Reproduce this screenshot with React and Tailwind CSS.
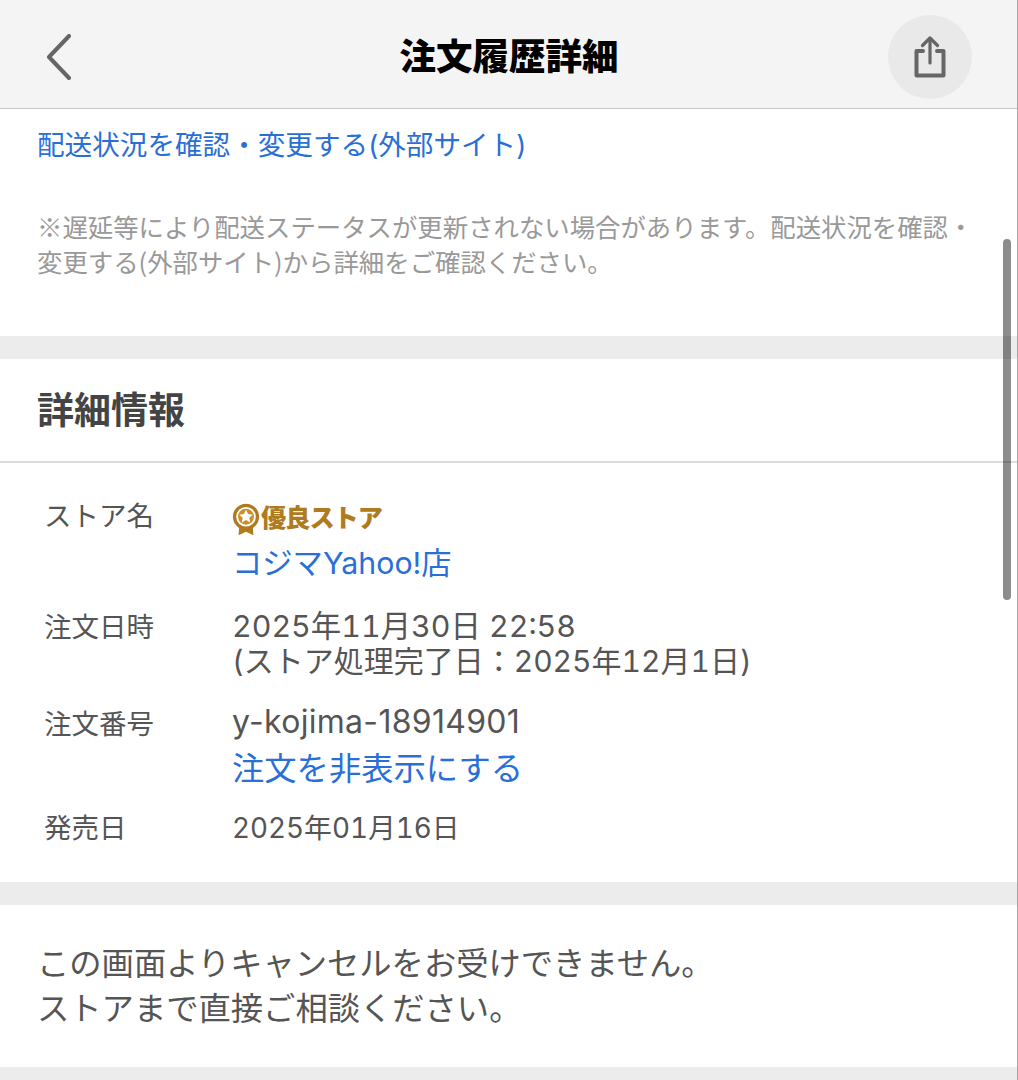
import React from 'react';

const jp = { fontFamily: 'Inter, "Noto Sans CJK JP", sans-serif' };

const Row = ({ label, labelClass = '', className = '', children }) => (
  <div className={`flex ${className}`}>
    <div className={`w-[195px] shrink-0 pl-[7px] text-[27.5px] leading-[36px] text-[#555] ${labelClass}`}>{label}</div>
    <div className="flex-1 text-[#555]">{children}</div>
  </div>
);

const Badge = () => (
  <svg width="28" height="35" viewBox="0 0 30 36" className="shrink-0">
    <path d="M8 23 L7 35 L15 31 L23 35 L22 23 Z" fill="#b07a1e" />
    <circle cx="15" cy="15" r="14" fill="#b07a1e" />
    <circle cx="15" cy="15" r="10.5" fill="#fff" />
    <circle cx="15" cy="15" r="8.5" fill="#c98f2c" />
    <path d="M15 7.5l2.2 4.7 5.1.6-3.8 3.4 1 5-4.5-2.6-4.5 2.6 1-5-3.8-3.4 5.1-.6z" fill="#fff" />
  </svg>
);

export default function App() {
  return (
    <div style={jp} className="relative mx-auto h-[1080px] w-[1018px] overflow-hidden border-r border-[#a8a8a8] bg-white">
      {/* Header */}
      <header className="grid h-[109px] grid-cols-[1fr_auto_1fr] items-center border-b border-[#c6c6c6] bg-[#f4f4f4] pl-[46px] pr-[45px] pt-[6px]">
        <svg width="26" height="46" viewBox="0 0 26 46" fill="none">
          <path d="M23 2 L3 23 L23 44" stroke="#666" strokeWidth="4" strokeLinecap="round" strokeLinejoin="round" />
        </svg>
        <h1 className="text-[36.5px] font-black leading-none text-black">注文履歴詳細</h1>
        <div className="flex h-[84px] w-[84px] items-center justify-center justify-self-end rounded-full bg-[#e9e9e9]">
          <svg width="34" height="44" viewBox="0 0 34 44" fill="none" stroke="#666" strokeLinecap="round" strokeLinejoin="round">
            <path d="M10 16 H3.5 V40.5 H30.5 V16 H24" strokeWidth="4" />
            <path d="M17 28 V3.5" strokeWidth="3.2" />
            <path d="M9.5 10.5 L17 3 L24.5 10.5" strokeWidth="3.2" />
          </svg>
        </div>
      </header>

      {/* Delivery note */}
      <section className="h-[227px] px-[37px] pt-[18px]">
        <a className="block text-[27.6px] leading-[36px] text-[#2a6fd6]">配送状況を確認・変更する(外部サイト)</a>
        <p className="mt-[46px] font-['Noto_Sans_CJK_JP'] text-[25.4px] leading-[35px] text-[#999]">
          ※遅延等により配送ステータスが更新されない場合があります。配送状況を確認・変更する(外部サイト)から詳細をご確認ください。
        </p>
      </section>

      <div className="h-[23px] bg-[#ececec]" />

      {/* Detail info */}
      <section>
        <h2 className="flex h-[104px] items-center border-b-2 border-[#dcdcdc] px-[37px] text-[37px] font-bold leading-none text-[#444]">
          詳細情報
        </h2>
        <div className="h-[419px] px-[37px] pt-[35px]">
          <Row label="ストア名">
            <div className="flex h-[38px] translate-y-[2px] items-center gap-[1px] text-[25.2px] font-black tracking-[-1px] text-[#b07a1e]">
              <Badge />
              優良ストア
            </div>
            <a className="mt-[7px] block text-[30.3px] leading-[40px] text-[#2a6fd6]">コジマYahoo!店</a>
          </Row>
          <Row label="注文日時" className="mt-[26px]">
            <div className="text-[30.4px] leading-[35px] tabular-nums">2025年11月30日 22:58</div>
            <div className="text-[30px] leading-[35px] tabular-nums">(ストア処理完了日：2025年12月1日)</div>
          </Row>
          <Row label="注文番号" labelClass="pt-[2px]" className="mt-[25px]">
            <div className="text-[32px] leading-[36px] tracking-[0.3px]">y-kojima-18914901</div>
            <a className="mt-[7px] block text-[32.3px] leading-[44px] text-[#2a6fd6]">注文を非表示にする</a>
          </Row>
          <Row label="発売日" className="mt-[19px]">
            <div className="text-[27.8px] leading-[36px] tabular-nums">2025年01月16日</div>
          </Row>
        </div>
      </section>

      <div className="h-[23px] bg-[#ececec]" />

      {/* Cancel note */}
      <section className="h-[162px] px-[37px] pt-[36px] text-[32.3px] leading-[45px] text-[#555]">
        <p>この画面よりキャンセルをお受けできません。</p>
        <p>ストアまで直接ご相談ください。</p>
      </section>

      <div className="h-[14px] bg-[#ececec]" />

      {/* Scroll indicator */}
      <div className="absolute left-[1003px] top-[239px] h-[361px] w-[8px] rounded-full bg-black/45" />
    </div>
  );
}
